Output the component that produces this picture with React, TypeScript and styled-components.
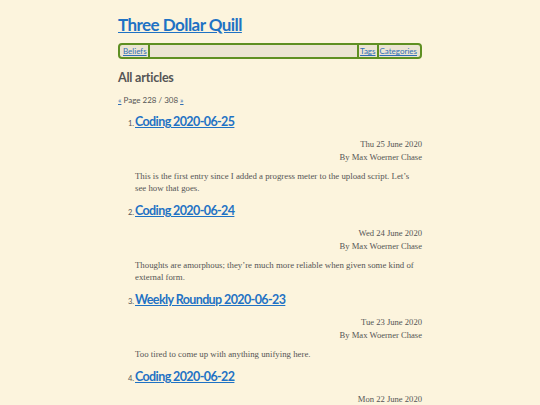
import React from "react";
import styled, { createGlobalStyle } from "styled-components";

const Global = createGlobalStyle`
  html, body { margin: 0; padding: 0; background: #fcf4dd; }
  body { font-family: "Liberation Serif", serif; color: #555; }
`;

const Page = styled.div`
  width: 304px;
  margin: 0 auto;
  padding-top: 14px;
`;

const Title = styled.a`
  display: inline-block;
  font-family: Lato, sans-serif;
  font-weight: 700;
  font-size: 17px;
  letter-spacing: -0.55px;
  line-height: 22px;
  color: #1f72c4;
  text-decoration: underline;
`;

const Nav = styled.nav`
  margin-top: 7px;
  height: 12px;
  border: 2px solid #5e8f22;
  border-radius: 4px;
  background: #ebe4d2;
  display: flex;
  align-items: stretch;
  padding: 0 2px;
`;

const NavLink = styled.a<{ $sepLeft?: boolean; $sepRight?: boolean }>`
  font-family: Lato, sans-serif;
  font-size: 8px;
  line-height: 12px;
  color: #2f6fb5;
  text-decoration: underline;
  padding: 0 1px;
  border-left: ${(p) => (p.$sepLeft ? "2px solid #5e8f22" : "none")};
  border-right: ${(p) => (p.$sepRight ? "2px solid #5e8f22" : "none")};
`;

const Spacer = styled.div`
  flex: 1;
`;

const Heading = styled.h2`
  margin: 10px 0 0;
  font-family: Lato, sans-serif;
  font-weight: 700;
  font-size: 12.5px;
  letter-spacing: -0.2px;
  line-height: 18px;
  color: #555;
`;

const Pager = styled.p`
  margin: 7px 0 0;
  font-family: Lato, sans-serif;
  font-size: 8px;
  line-height: 12px;
  color: #555;
  a { color: #2f6fb5; text-decoration: underline; }
`;

const List = styled.ol`
  margin: 7px 0 0;
  padding-left: 17px;
  list-style: none;
  counter-reset: item;
`;

const Item = styled.li`
  counter-increment: item;
`;

const ItemTitle = styled.h3`
  margin: 0;
  display: flex;
  align-items: baseline;
  font-family: Lato, sans-serif;
  font-size: 12.5px;
  line-height: 18px;
  &::before {
    content: counter(item) ".";
    font-family: Lato, sans-serif;
    font-weight: 400;
    font-size: 7.5px;
    color: #555;
    width: 0;
    margin-left: -7px;
    margin-right: 7px;
  }
`;

const ItemLink = styled.a`
  color: #1f72c4;
  font-weight: 700;
  letter-spacing: -0.6px;
  text-decoration: underline;
`;

const Meta = styled.div`
  margin-top: 5px;
  text-align: right;
  font-size: 8.6px;
  line-height: 13px;
  color: #555;
`;

const Summary = styled.p`
  margin: 6px 0 8px;
  font-size: 8.8px;
  line-height: 12px;
  color: #555;
`;

const posts = [
  {
    title: "Coding 2020-06-25",
    date: "Thu 25 June 2020",
    summary:
      "This is the first entry since I added a progress meter to the upload script. Let\u2019s see how that goes.",
  },
  {
    title: "Coding 2020-06-24",
    date: "Wed 24 June 2020",
    summary:
      "Thoughts are amorphous; they\u2019re much more reliable when given some kind of external form.",
  },
  {
    title: "Weekly Roundup 2020-06-23",
    date: "Tue 23 June 2020",
    summary: "Too tired to come up with anything unifying here.",
  },
  {
    title: "Coding 2020-06-22",
    date: "Mon 22 June 2020",
    summary: "",
  },
];

export default function App() {
  return (
    <>
      <Global />
      <Page>
        <Title href="#">Three Dollar Quill</Title>
        <Nav>
          <NavLink href="#" $sepRight>Beliefs</NavLink>
          <Spacer />
          <NavLink href="#" $sepLeft $sepRight>Tags</NavLink>
          <NavLink href="#">Categories</NavLink>
        </Nav>
        <Heading>All articles</Heading>
        <Pager>
          <a href="#">«</a> Page 228 / 308 <a href="#">»</a>
        </Pager>
        <List>
          {posts.map((p) => (
            <Item key={p.title}>
              <ItemTitle>
                <ItemLink href="#">{p.title}</ItemLink>
              </ItemTitle>
              <Meta>
                {p.date}
                <br />
                By Max Woerner Chase
              </Meta>
              {p.summary && <Summary>{p.summary}</Summary>}
            </Item>
          ))}
        </List>
      </Page>
    </>
  );
}
